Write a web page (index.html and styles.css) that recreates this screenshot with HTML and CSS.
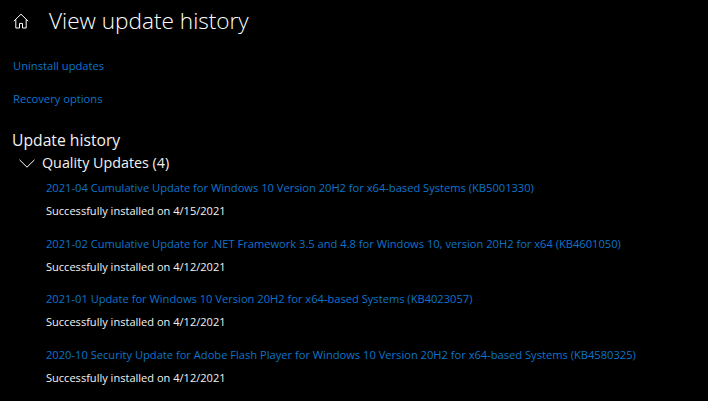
FILE: index.html
```html
<!DOCTYPE html>
<html lang="en">
<head>
<meta charset="utf-8">
<title>View update history</title>
<link rel="stylesheet" href="styles.css">
</head>
<body>
<header class="head">
<svg class="home" width="16" height="16" viewBox="0 0 16 16" fill="none" stroke="#fff" stroke-width="1"><path d="M0.8 8.2 8 1.2l7.2 7M2.8 6.4V15h3.7v-4.6h3V15h3.7V6.4"/></svg>
<h1>View update history</h1>
</header>
<nav class="links">
<a>Uninstall updates</a>
<a>Recovery options</a>
</nav>
<h2>Update history</h2>
<div class="group">
<svg class="chev" width="16" height="9" viewBox="0 0 16 9" fill="none" stroke="#fff" stroke-width="1"><path d="M0.5 0.8 8 8.2 15.5 0.8"/></svg>
<span>Quality Updates (4)</span>
</div>
<ul class="list">
<li><a>2021-04 Cumulative Update for Windows 10 Version 20H2 for x64-based Systems (KB5001330)</a><p>Successfully installed on 4/15/2021</p></li>
<li><a>2021-02 Cumulative Update for .NET Framework 3.5 and 4.8 for Windows 10, version 20H2 for x64 (KB4601050)</a><p>Successfully installed on 4/12/2021</p></li>
<li><a>2021-01 Update for Windows 10 Version 20H2 for x64-based Systems (KB4023057)</a><p>Successfully installed on 4/12/2021</p></li>
<li><a>2020-10 Security Update for Adobe Flash Player for Windows 10 Version 20H2 for x64-based Systems (KB4580325)</a><p>Successfully installed on 4/12/2021</p></li>
</ul>
</body>
</html>
```
FILE: styles.css
```css
html,body{margin:0;padding:0;background:#000;color:#fff;height:401px;overflow:hidden;font-family:"Open Sans","Noto Sans","Liberation Sans",sans-serif;}
.head{display:flex;align-items:center;height:42px;padding-left:13px;}
.home{flex:none;}
h1{margin:0 0 0 20px;font-size:22.6px;font-weight:300;line-height:42px;white-space:nowrap;}
.links{display:flex;flex-direction:column;gap:16px;padding:15px 0 0 13px;}
.links a{font-size:11.2px;line-height:17px;color:#0c74cc;}
h2{margin:22px 0 0 12px;font-size:15.7px;font-weight:400;line-height:22px;color:#f2f2f2;}
.group{display:flex;align-items:center;gap:7px;margin:2px 0 0 19px;font-size:14.3px;line-height:20px;color:#f2f2f2;}
.list{list-style:none;margin:0;padding:0 0 0 46px;}
.list li{height:55.6px;}
.list a{display:block;font-size:11.13px;line-height:17px;color:#0c74cc;padding-top:6px;white-space:nowrap;}
.list p{margin:6px 0 0;font-size:11.05px;line-height:17px;color:#f2f2f2;}
```
